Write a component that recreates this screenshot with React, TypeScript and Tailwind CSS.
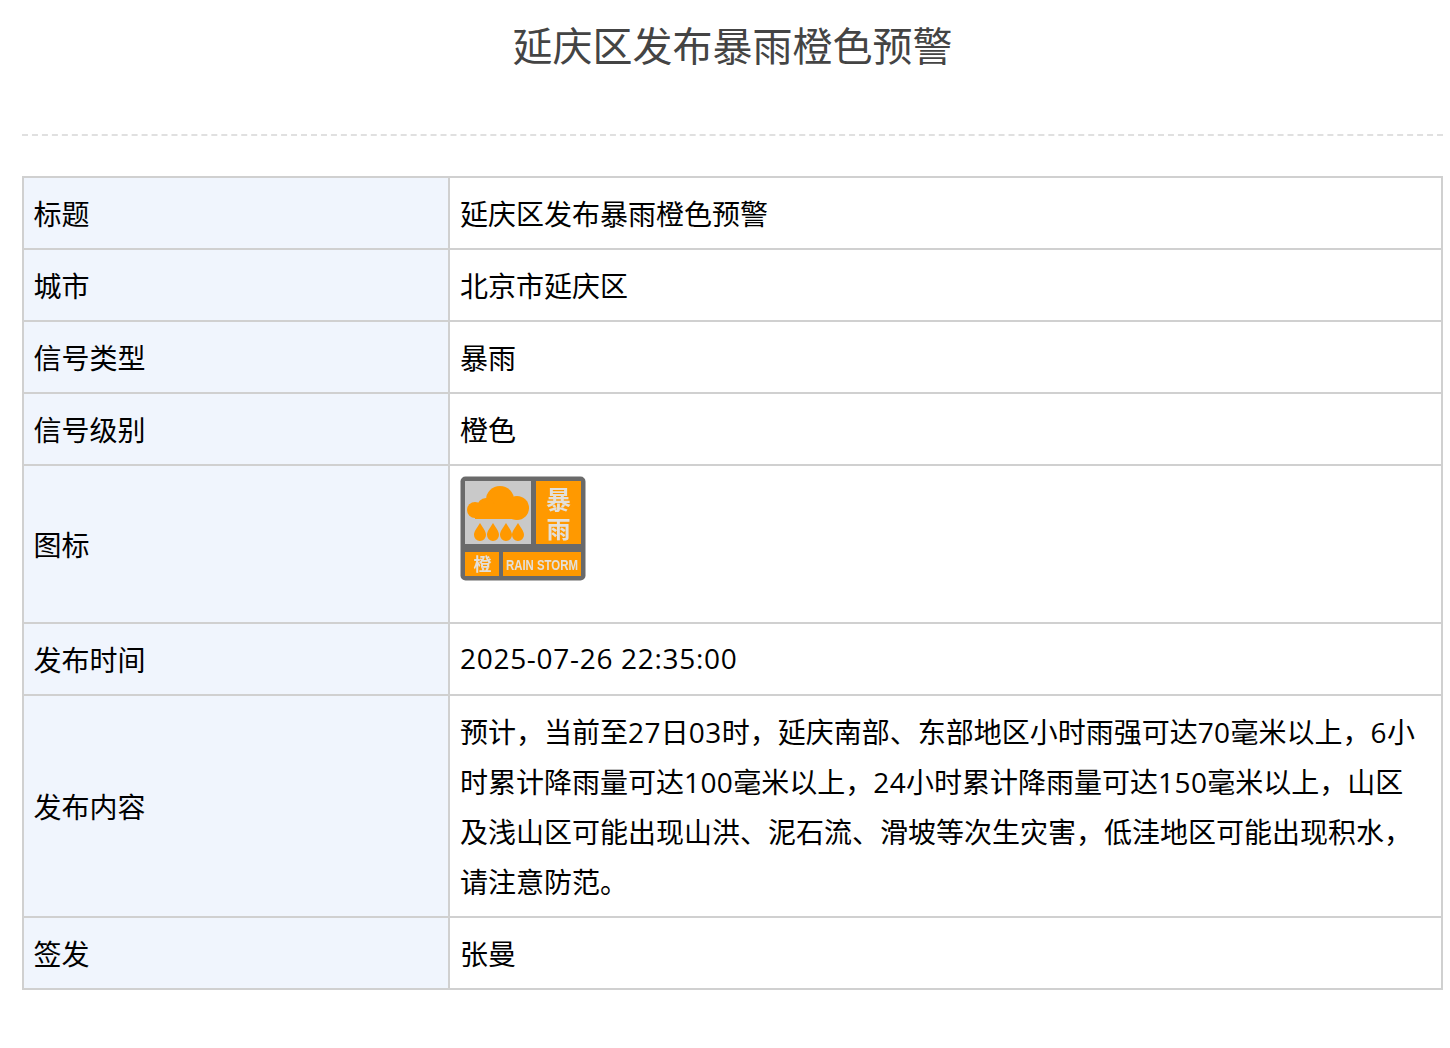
const rows: [string, string][] = [
  ['标题', '延庆区发布暴雨橙色预警'],
  ['城市', '北京市延庆区'],
  ['信号类型', '暴雨'],
  ['信号级别', '橙色'],
];

const drops = [20, 33, 46, 58];

function RainIcon() {
  return (
    <svg width="126" height="105" viewBox="0 0 126 105" className="block" style={{ fontFamily: '"Noto Sans CJK SC", sans-serif' }}>
      <defs>
        <filter id="soft">
          <feGaussianBlur stdDeviation="0.6" />
        </filter>
      </defs>
      <g filter="url(#soft)">
        <rect x="0.5" y="0.5" width="125" height="104" rx="5" fill="#6b6b6b" />
        <rect x="5" y="5" width="66" height="63" fill="#c9c9c9" />
        <rect x="76" y="5" width="45" height="63" fill="#ff9900" />
        <rect x="5" y="76" width="34" height="24" fill="#ff9900" />
        <rect x="43" y="76" width="78" height="24" fill="#ff9900" />
        {/* cloud */}
        <g fill="#ff9900">
          <circle cx="40" cy="24" r="14" />
          <circle cx="26" cy="31" r="9" />
          <circle cx="15" cy="34" r="8" />
          <circle cx="57" cy="32" r="12" />
          <rect x="15" y="30" width="42" height="13" />
        </g>
        {/* drops */}
        {drops.map((x) => (
          <path key={x} d={`M${x} 47c3 5 6 8 6 12a6 6 0 0 1-12 0c0-4 3-7 6-12z`} fill="#ff9900" />
        ))}
        <text x="98.5" y="33" textAnchor="middle" fontSize="25" fontWeight="700" fill="#e3e0da">暴</text>
        <text x="98.5" y="62" textAnchor="middle" fontSize="24" fontWeight="700" fill="#e3e0da">雨</text>
        <text x="22.5" y="95" textAnchor="middle" fontSize="18" fontWeight="700" fill="#e3e0da">橙</text>
        <text transform="translate(46 94) scale(0.76 1)" fontSize="15" fontWeight="700" fill="#e3e0da" style={{ fontFamily: '"Liberation Sans", sans-serif' }}>RAIN STORM</text>
      </g>
    </svg>
  );
}

function Row({ label, valueClass = 'pt-[11px] pb-[9px]', children }: { label: string; valueClass?: string; children: React.ReactNode }) {
  return (
    <tr>
      <td className="w-[426px] border-2 border-[#d0d0d0] bg-[#f0f5fd] pt-[11px] pr-[10px] pb-[9px] pl-[9.5px]">{label}</td>
      <td className={`border-2 border-[#d0d0d0] bg-white px-[10px] ${valueClass}`}>{children}</td>
    </tr>
  );
}

// latin digits run a little wider in the reference than Open Sans
function Num({ children }: { children: React.ReactNode }) {
  return <span className="tracking-[0.4px]">{children}</span>;
}

export default function App() {
  return (
    <div className="min-h-[1048px] bg-white pr-[7px] pl-[22px] text-black" style={{ fontFamily: '"Open Sans", "Noto Sans CJK SC", sans-serif' }}>
      <h1 className="h-[136px] border-b-2 border-dashed border-[#e0e0e0] pt-[21px] text-center text-[40px] leading-[50px] font-normal text-[#444]">
        延庆区发布暴雨橙色预警
      </h1>
      <table className="mt-[40px] w-full table-fixed border-collapse text-[28px] leading-[50px]">
        <tbody>
          {rows.map(([label, value]) => (
            <Row key={label} label={label}>{value}</Row>
          ))}
          <Row label="图标" valueClass="pt-[10px] pb-[10px]">
            <div className="pb-[31px]">
              <RainIcon />
            </div>
          </Row>
          <Row label="发布时间" valueClass="pt-[9px] pb-[11px]">
            <span className="tracking-[0.7px]">2025-07-26 22:35:00</span>
          </Row>
          <Row label="发布内容">
            预计，当前至<Num>27</Num>日<Num>03</Num>时，延庆南部、东部地区小时雨强可达<Num>70</Num>毫米以上，<Num>6</Num>小
            <br />
            时累计降雨量可达<Num>100</Num>毫米以上，<Num>24</Num>小时累计降雨量可达<Num>150</Num>毫米以上，山区
            <br />
            及浅山区可能出现山洪、泥石流、滑坡等次生灾害，低洼地区可能出现积水，
            <br />
            请注意防范。
          </Row>
          <Row label="签发">张曼</Row>
        </tbody>
      </table>
    </div>
  );
}
